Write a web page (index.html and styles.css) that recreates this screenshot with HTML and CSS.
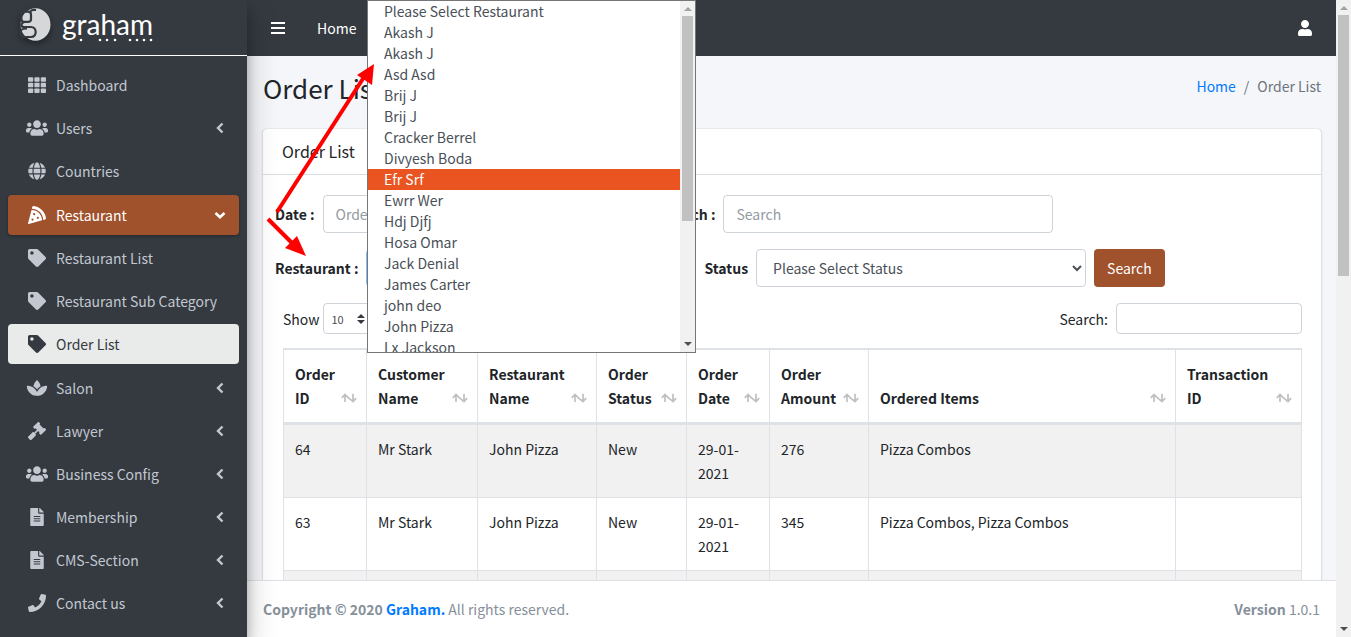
FILE: index.html
```html
<!DOCTYPE html>
<html lang="en">
<head>
<meta charset="utf-8">
<title>Order List</title>
<link rel="stylesheet" href="styles.css">
</head>
<body>
<svg class="defs" aria-hidden="true">
  <symbol id="i-th" viewBox="0 0 512 512"><rect x="0" y="32" width="149" height="128" rx="24"/><rect x="181" y="32" width="149" height="128" rx="24"/><rect x="363" y="32" width="149" height="128" rx="24"/><rect x="0" y="192" width="149" height="128" rx="24"/><rect x="181" y="192" width="149" height="128" rx="24"/><rect x="363" y="192" width="149" height="128" rx="24"/><rect x="0" y="352" width="149" height="128" rx="24"/><rect x="181" y="352" width="149" height="128" rx="24"/><rect x="363" y="352" width="149" height="128" rx="24"/></symbol>
  <symbol id="i-users" viewBox="0 0 640 512"><path d="M96 224c35.3 0 64-28.7 64-64s-28.7-64-64-64-64 28.7-64 64 28.7 64 64 64zm448 0c35.3 0 64-28.7 64-64s-28.7-64-64-64-64 28.7-64 64 28.7 64 64 64zm32 32h-64c-17.6 0-33.5 7.1-45.1 18.6 40.3 22.1 68.9 62 75.1 109.4h66c17.7 0 32-14.3 32-32v-32c0-35.3-28.7-64-64-64zm-256 0c61.9 0 112-50.1 112-112S381.9 32 320 32 208 82.1 208 144s50.1 112 112 112zm76.8 32h-8.3c-20.8 10-43.9 16-68.5 16s-47.6-6-68.5-16h-8.3C179.6 288 128 339.6 128 403.2V432c0 26.5 21.5 48 48 48h288c26.5 0 48-21.5 48-48v-28.8c0-63.6-51.6-115.2-115.2-115.2zm-223.7-13.4C161.5 263.1 145.6 256 128 256H64c-35.3 0-64 28.7-64 64v32c0 17.7 14.3 32 32 32h65.9c6.3-47.4 34.9-87.3 75.2-109.4z"/></symbol>
  <symbol id="i-globe" viewBox="0 0 496 512"><path d="M336.5 160C322 70.7 287.8 8 248 8s-74 62.7-88.5 152h177zM152 256c0 22.2 1.2 43.5 3.3 64h185.3c2.1-20.5 3.3-41.8 3.3-64s-1.2-43.5-3.3-64H155.3c-2.1 20.5-3.3 41.8-3.3 64zm324.7-96c-28.6-67.9-86.5-120.4-158-141.6 24.4 33.8 41.2 84.7 50 141.6h108zM177.2 18.4C105.8 39.6 47.8 92.1 19.3 160h108c8.7-56.9 25.5-107.8 49.9-141.6zM487.4 192H372.7c2.1 21 3.3 42.5 3.3 64s-1.2 43-3.3 64h114.6c5.5-20.5 8.6-41.8 8.6-64s-3.1-43.5-8.5-64zM120 256c0-21.5 1.2-43 3.3-64H8.6C3.2 212.5 0 233.8 0 256s3.2 43.5 8.6 64h114.6c-2-21-3.2-42.5-3.2-64zm39.5 96c14.5 89.3 48.7 152 88.5 152s74-62.7 88.5-152h-177zm159.3 141.6c71.4-21.2 129.4-73.7 158-141.6h-108c-8.8 56.9-25.6 107.8-50 141.6zM19.3 352c28.6 67.9 86.5 120.4 158 141.6-24.4-33.8-41.2-84.7-50-141.6h-108z"/></symbol>
  <symbol id="i-pizza" viewBox="0 0 512 512"><path d="M158.87.15c-16.16-1.52-31.2 8.42-35.33 24.12l-14.81 56.27c187.62 5.49 314.54 130.61 322.48 317l56.94-15.78c15.72-4.36 25.49-19.68 23.62-35.9C490.89 165.08 340.78 17.32 158.87.15zm-58.47 112L.55 491.64a16.21 16.21 0 0 0 20 19.75l379-105.1c-4.27-174.89-123.08-292.14-299.15-294.1zM128 416a32 32 0 1 1 32-32 32 32 0 0 1-32 32zm48-152a32 32 0 1 1 32-32 32 32 0 0 1-32 32zm104 104a32 32 0 1 1 32-32 32 32 0 0 1-32 32z"/></symbol>
  <symbol id="i-tag" viewBox="0 0 512 512"><path d="M0 252.118V48C0 21.49 21.49 0 48 0h204.118a48 48 0 0 1 33.941 14.059l211.882 211.882c18.745 18.745 18.745 49.137 0 67.882L293.823 497.941c-18.745 18.745-49.137 18.745-67.882 0L14.059 286.059A48 48 0 0 1 0 252.118zM112 64c-26.51 0-48 21.49-48 48s21.49 48 48 48 48-21.49 48-48-21.49-48-48-48z"/></symbol>
  <symbol id="i-spa" viewBox="0 0 576 512"><path d="M568.25 192c-29.04.13-135.01 6.16-213.84 83-33.12 29.63-53.36 63.3-66.41 94.86-13.05-31.56-33.29-65.23-66.41-94.86-78.83-76.84-184.8-82.87-213.84-83-4.41-.02-7.79 3.4-7.75 7.82.23 27.92 7.14 126.14 88.77 199.3C172.79 480.94 256 480 288 480s115.19.95 199.23-80.88c81.64-73.17 88.54-171.38 88.77-199.3.04-4.42-3.34-7.84-7.75-7.82zM287.98 302.6c12.82-18.85 27.6-35.78 44.09-50.52 19.09-18.61 39.58-33.3 60.26-45.18-16.44-70.5-51.72-133.05-96.73-172.22-4.11-3.58-11.02-3.58-15.14 0-44.99 39.14-80.27 101.63-96.73 172.07 20.37 11.7 40.5 26.14 59.22 44.39a282.768 282.768 0 0 1 45.03 51.46z"/></symbol>
  <symbol id="i-gavel" viewBox="0 0 512 512"><path d="M504.971 199.362l-22.627-22.627c-9.373-9.373-24.569-9.373-33.941 0l-5.657 5.657L329.608 69.255l5.657-5.657c9.373-9.373 9.373-24.569 0-33.941L312.638 7.029c-9.373-9.373-24.569-9.373-33.941 0L154.246 131.48c-9.373 9.373-9.373 24.569 0 33.941l22.627 22.627c9.373 9.373 24.569 9.373 33.941 0l5.657-5.657 39.598 39.598-81.04 81.04-5.657-5.657c-12.497-12.497-32.758-12.497-45.255 0L9.373 412.118c-12.497 12.497-12.497 32.758 0 45.255l45.255 45.255c12.497 12.497 32.758 12.497 45.255 0l114.745-114.745c12.497-12.497 12.497-32.758 0-45.255l-5.657-5.657 81.04-81.04 39.598 39.598-5.657 5.657c-9.373 9.373-9.373 24.569 0 33.941l22.627 22.627c9.373 9.373 24.569 9.373 33.941 0l124.451-124.451c9.372-9.372 9.372-24.568 0-33.941z"/></symbol>
  <symbol id="i-file" viewBox="0 0 384 512"><path d="M224 136V0H24C10.7 0 0 10.7 0 24v464c0 13.3 10.7 24 24 24h336c13.3 0 24-10.7 24-24V160H248c-13.2 0-24-10.8-24-24zm64 236c0 6.6-5.4 12-12 12H108c-6.6 0-12-5.4-12-12v-8c0-6.6 5.4-12 12-12h168c6.6 0 12 5.4 12 12v8zm0-64c0 6.6-5.4 12-12 12H108c-6.6 0-12-5.4-12-12v-8c0-6.6 5.4-12 12-12h168c6.6 0 12 5.4 12 12v8zm0-72v8c0 6.6-5.4 12-12 12H108c-6.6 0-12-5.4-12-12v-8c0-6.6 5.4-12 12-12h168c6.6 0 12 5.4 12 12zm96-114.1v6.1H256V0h6.1c6.4 0 12.5 2.5 17 7l97.9 98c4.5 4.5 7 10.6 7 16.9z"/></symbol>
  <symbol id="i-phone" viewBox="0 0 512 512"><path d="M493.4 24.6l-104-24c-11.3-2.6-22.9 3.3-27.5 13.9l-48 112c-4.2 9.8-1.4 21.3 6.9 28l60.6 49.6c-36 76.7-98.9 140.5-177.2 177.2l-49.6-60.6c-6.8-8.3-18.2-11.1-28-6.9l-112 48C3.9 366.5-2 378.1.6 389.4l24 104C27.1 504.2 36.7 512 48 512c256.1 0 464-207.5 464-464 0-11.2-7.7-20.9-18.6-23.4z"/></symbol>
  <symbol id="i-user" viewBox="0 0 448 512"><path d="M224 256c70.7 0 128-57.3 128-128S294.7 0 224 0 96 57.3 96 128s57.3 128 128 128zm89.6 32h-16.7c-22.2 10.2-46.9 16-72.9 16s-50.6-5.8-72.9-16h-16.7C60.2 288 0 348.2 0 422.4V464c0 26.5 21.5 48 48 48h352c26.5 0 48-21.5 48-48v-41.6c0-74.2-60.2-134.4-134.4-134.4z"/></symbol>
  <symbol id="i-left" viewBox="0 0 12 12"><path d="M8.500 1.500 4 6l4.500 4.500" fill="none" stroke="currentColor" stroke-width="2.400"/></symbol>
  <symbol id="i-down" viewBox="0 0 12 12"><path d="M1.500 4 6 8.200 10.500 4" fill="none" stroke="currentColor" stroke-width="2.600"/></symbol>
  <symbol id="i-sort" viewBox="0 0 16 10"><path d="M4 9V1.500M.8 4.800 4 1.500l3.500 3.300L9 6.200l3 2.300 3.200-3.300M12 .8v7.500" fill="none" stroke="currentColor" stroke-width="1.700"/></symbol>
</svg>

<aside class="sidebar">
  <a class="brand" href="#">
    <svg class="brand-mark" viewBox="0 0 34 36" aria-hidden="true">
      <ellipse cx="17.500" cy="16.500" rx="15" ry="16.300" fill="#d5d7d8"/>
      <g fill="none" stroke="#343a40" stroke-width="2.200">
        <rect x="3.400" y="3.700" width="9.600" height="10.200" rx="3"/>
        <path d="M12 5c0-2.500 2-3.500 6-3M6 14c-4 2-3 5 0 5h7c6 0 6.500 10 0 10H7c-4 0-5-3-4-6.500 1-2 3-2 6-2"/>
      </g>
    </svg>
    <span class="brand-word">graham
      <svg class="brand-dots" viewBox="0 0 92 4" aria-hidden="true"><g fill="#fff"><circle cx="19" cy="2" r="1.300"/><circle cx="38" cy="2" r="1.300"/><circle cx="45" cy="2" r="1.300"/><circle cx="53" cy="2" r="1.300"/><circle cx="68" cy="2" r="1.300"/><circle cx="75" cy="2" r="1.300"/><circle cx="82" cy="2" r="1.300"/><circle cx="89" cy="2" r="1.300"/></g></svg>
    </span>
  </a>
  <nav class="menu">
    <a class="item" href="#"><svg class="icon"><use href="#i-th"/></svg><span>Dashboard</span></a>
    <a class="item" href="#"><svg class="icon"><use href="#i-users"/></svg><span>Users</span><svg class="caret"><use href="#i-left"/></svg></a>
    <a class="item" href="#"><svg class="icon"><use href="#i-globe"/></svg><span>Countries</span></a>
    <div class="group">
      <a class="item open" href="#"><svg class="icon"><use href="#i-pizza"/></svg><span>Restaurant</span><svg class="caret"><use href="#i-down"/></svg></a>
      <a class="item" href="#"><svg class="icon"><use href="#i-tag"/></svg><span>Restaurant List</span></a>
      <a class="item" href="#"><svg class="icon"><use href="#i-tag"/></svg><span>Restaurant Sub Category</span></a>
      <a class="item current" href="#"><svg class="icon"><use href="#i-tag"/></svg><span>Order List</span></a>
    </div>
    <a class="item" href="#"><svg class="icon"><use href="#i-spa"/></svg><span>Salon</span><svg class="caret"><use href="#i-left"/></svg></a>
    <a class="item" href="#"><svg class="icon"><use href="#i-gavel"/></svg><span>Lawyer</span><svg class="caret"><use href="#i-left"/></svg></a>
    <a class="item" href="#"><svg class="icon"><use href="#i-users"/></svg><span>Business Config</span><svg class="caret"><use href="#i-left"/></svg></a>
    <a class="item" href="#"><svg class="icon"><use href="#i-file"/></svg><span>Membership</span><svg class="caret"><use href="#i-left"/></svg></a>
    <a class="item" href="#"><svg class="icon"><use href="#i-file"/></svg><span>CMS-Section</span><svg class="caret"><use href="#i-left"/></svg></a>
    <a class="item" href="#"><svg class="icon"><use href="#i-phone"/></svg><span>Contact us</span><svg class="caret"><use href="#i-left"/></svg></a>
  </nav>
</aside>

<div class="page">
  <header class="navbar">
    <button class="burger" type="button" aria-label="Toggle menu"><i></i><i></i><i></i></button>
    <a class="nav-link" href="#">Home</a>
    <button class="account" type="button" aria-label="Account"><svg class="icon"><use href="#i-user"/></svg></button>
  </header>

  <main class="content">
    <div class="heading">
      <h1>Order List</h1>
      <nav class="crumbs"><a href="#">Home</a><span>/</span><span>Order List</span></nav>
    </div>

    <section class="card">
      <h2 class="card-title">Order List</h2>
      <div class="card-body">
        <form class="filters">
          <div class="filter-row">
            <label for="date">Date :</label>
            <input class="control" id="date" type="text" placeholder="Order Date">
            <label for="keyword">Search :</label>
            <input class="control" id="keyword" type="text" placeholder="Search">
          </div>
          <div class="filter-row">
            <label for="restaurant">Restaurant :</label>
            <select class="control focused" id="restaurant"><option>Please Select Restaurant</option></select>
            <label for="status">Status</label>
            <select class="control" id="status"><option>Please Select Status</option></select>
            <button class="submit" type="submit">Search</button>
          </div>
        </form>
        <div class="table-tools">
          <div class="length"><label for="length">Show</label><span class="length-box"><select id="length"><option>10</option></select><svg class="updown" viewBox="0 0 8 10" aria-hidden="true"><path d="M0 4 4 0l4 4zM0 6l4 4 4-4z"/></svg></span></div>
          <div class="lookup"><label for="lookup">Search:</label><input id="lookup" type="search"></div>
        </div>
        <table class="orders">
          <colgroup><col class="w-id"><col class="w-customer"><col class="w-restaurant"><col class="w-status"><col class="w-date"><col class="w-amount"><col><col class="w-transaction"></colgroup>
          <thead>
            <tr>
              <th><div class="th">Order ID<svg class="sort"><use href="#i-sort"/></svg></div></th>
              <th><div class="th">Customer Name<svg class="sort"><use href="#i-sort"/></svg></div></th>
              <th><div class="th">Restaurant Name<svg class="sort"><use href="#i-sort"/></svg></div></th>
              <th><div class="th">Order Status<svg class="sort"><use href="#i-sort"/></svg></div></th>
              <th><div class="th">Order Date<svg class="sort"><use href="#i-sort"/></svg></div></th>
              <th><div class="th">Order Amount<svg class="sort"><use href="#i-sort"/></svg></div></th>
              <th><div class="th">Ordered Items<svg class="sort"><use href="#i-sort"/></svg></div></th>
              <th><div class="th">Transaction ID<svg class="sort"><use href="#i-sort"/></svg></div></th>
            </tr>
          </thead>
          <tbody>
            <tr><td>64</td><td>Mr Stark</td><td>John Pizza</td><td>New</td><td>29-01-2021</td><td>276</td><td>Pizza Combos</td><td></td></tr>
            <tr><td>63</td><td>Mr Stark</td><td>John Pizza</td><td>New</td><td>29-01-2021</td><td>345</td><td>Pizza Combos, Pizza Combos</td><td></td></tr>
            <tr><td></td><td></td><td></td><td></td><td></td><td></td><td></td><td></td></tr>
          </tbody>
        </table>
      </div>
    </section>
  </main>

  <footer class="footer">
    <p><strong>Copyright © 2020 <a href="#">Graham.</a></strong> All rights reserved.</p>
    <p><strong>Version</strong> 1.0.1</p>
  </footer>
</div>

<div class="scrollbar" aria-hidden="true"><i class="up"></i><div class="track"><div class="thumb"></div></div><i class="down"></i></div>

<div class="popup">
  <ul class="options" role="listbox" aria-label="Restaurant">
    <li role="option">Please Select Restaurant</li>
    <li role="option">Akash J</li>
    <li role="option">Akash J</li>
    <li role="option">Asd Asd</li>
    <li role="option">Brij J</li>
    <li role="option">Brij J</li>
    <li role="option">Cracker Berrel</li>
    <li role="option">Divyesh Boda</li>
    <li role="option" class="active" aria-selected="true">Efr Srf</li>
    <li role="option">Ewrr Wer</li>
    <li role="option">Hdj Djfj</li>
    <li role="option">Hosa Omar</li>
    <li role="option">Jack Denial</li>
    <li role="option">James Carter</li>
    <li role="option">john deo</li>
    <li role="option">John Pizza</li>
    <li role="option">Lx Jackson</li>
  </ul>
  <div class="scrollbar" aria-hidden="true"><i class="up"></i><div class="track"><div class="thumb long"></div></div><i class="down"></i></div>
</div>

<svg class="arrows" viewBox="0 0 120 200" aria-hidden="true">
  <g fill="red" stroke="red">
    <path d="M17 152 106 14" stroke-width="4"/>
    <path d="M114 4 112 25 97 15z" stroke="none"/>
    <path d="M8 159 36 187" stroke-width="4"/>
    <path d="M46 196 25 188 37 176z" stroke="none"/>
  </g>
</svg>
</body>
</html>
```

FILE: styles.css
```css
* { box-sizing: border-box; }

body {
  margin: 0;
  height: 100vh;
  display: flex;
  overflow: hidden;
  position: relative;
  background: #f4f6f9;
  color: #212529;
  font: 14px/24px "Noto Sans CJK SC", "Open Sans", sans-serif;
}

a { color: #007bff; text-decoration: none; }
h1, h2, p, ul { margin: 0; padding: 0; }
button, input, select { font: inherit; color: inherit; }
.defs { position: absolute; width: 0; height: 0; }

/* Sidebar */
.sidebar {
  flex: 0 0 247px;
  background: #343a40;
  box-shadow: 0 14px 28px rgba(0, 0, 0, .25), 0 10px 10px rgba(0, 0, 0, .22);
  z-index: 2;
}
.brand {
  display: flex;
  align-items: flex-start;
  gap: 10px;
  height: 56px;
  padding: 8px 18px 0;
  border-bottom: 1px solid #fff;
  color: #fff;
}
.brand-mark { width: 34px; height: 36px; filter: drop-shadow(0 3px 3px rgba(0, 0, 0, .4)); }
.brand-word { position: relative; font: 28px/32px Lato, sans-serif; }
.brand-dots { position: absolute; left: 0; bottom: -2px; width: 92px; height: 4px; }
.menu, .group {
  display: flex;
  flex-direction: column;
  gap: 3px;
}
.menu { padding: 9px 8px; }
.group { margin: 1px 0; }
.item {
  display: flex;
  align-items: center;
  height: 40px;
  padding: 0 13px 0 18px;
  border-radius: 4px;
  color: #c2c7d0;
}
.icon { width: 22px; height: 18px; fill: currentColor; }
.item span { margin-left: 8px; flex: 1; white-space: nowrap; }
.caret { width: 12px; height: 12px; }
.open { background: #a0522d; color: #fff; box-shadow: 0 1px 3px rgba(0, 0, 0, .3); }
.current { background: #e9eaea; color: #343a40; }

/* Page */
.page { flex: 1; min-width: 0; display: flex; flex-direction: column; }
.navbar {
  flex: 0 0 56px;
  display: flex;
  align-items: center;
  padding: 0 20px 0 24px;
  background: #343a40;
}
.burger, .account { border: 0; padding: 0; background: none; color: #fff; cursor: pointer; }
.burger { display: flex; flex-direction: column; gap: 3px; width: 14px; }
.burger i { height: 2px; background: #fff; }
.nav-link { margin-left: 32px; color: #fff; }
.account { margin-left: auto; display: flex; }
.account .icon { height: 16px; }

.content { flex: 1; min-height: 0; overflow: hidden; padding: 15px 15px 0 16px; }
.heading { display: flex; justify-content: space-between; align-items: flex-start; }
h1 { font-size: 26px; line-height: 34px; font-weight: 400; }
.crumbs { display: flex; gap: 8px; padding-top: 3px; color: #6c757d; }

.card {
  margin-top: 24px;
  background: #fff;
  border-radius: 4px;
  box-shadow: 0 0 1px rgba(0, 0, 0, .2), 0 1px 3px rgba(0, 0, 0, .2);
}
.card-title {
  padding: 10px 19px;
  border-bottom: 1px solid #dcdddf;
  font-size: 16px;
  line-height: 25px;
  font-weight: 400;
}
.card-body { padding: 20px 19px 0 20px; }
.filters { display: flex; flex-direction: column; gap: 16px; margin-left: -8px; }
.filter-row { display: flex; align-items: center; gap: 8px; }
.filter-row label { font-weight: 700; white-space: nowrap; }
.control {
  width: 330px;
  height: 38px;
  padding: 0 12px;
  border: 1px solid #ced4da;
  border-radius: 4px;
  background: #fff;
  color: #495057;
}
.control::placeholder { color: #939ba2; opacity: 1; }
.focused { border-color: #80bdff; }
.submit {
  height: 38px;
  padding: 0 13px;
  border: 0;
  border-radius: 4px;
  background: #a0522d;
  color: #fff;
}

.table-tools { display: flex; justify-content: space-between; margin: 16px 0 14px; }
.length, .lookup { display: flex; align-items: center; }
.length { gap: 3px; }
.lookup { gap: 8px; }
.length-box { display: flex; align-items: center; position: relative; }
.length select {
  appearance: none;
  width: 54px;
  height: 31px;
  padding: 0 8px;
  border: 1px solid #ced4da;
  border-radius: 4px;
  background: #fff;
  color: #495057;
  font-size: 11px;
}
.updown { position: absolute; right: 12px; width: 8px; height: 10px; fill: #343a40; }
.lookup input {
  width: 186px;
  height: 31px;
  border: 1px solid #ced4da;
  border-radius: 4px;
}

.orders {
  width: 100%;
  table-layout: fixed;
  border-collapse: separate;
  border-spacing: 0;
  border: 1px solid #dee2e6;
  border-width: 1px 0 0 1px;
}
.w-id { width: 83px; }
.w-customer { width: 111px; }
.w-restaurant { width: 119px; }
.w-status { width: 90px; }
.w-date { width: 83px; }
.w-amount { width: 99px; }
.w-transaction { width: 126px; }
.orders th, .orders td {
  height: 73px;
  padding: 12px 11px;
  border: 1px solid #dee2e6;
  border-width: 0 1px 1px 0;
  text-align: left;
  vertical-align: top;
}
.orders th {
  padding-right: 9px;
  border-top-width: 1px;
  border-bottom-width: 3px;
  vertical-align: bottom;
}
.orders tbody tr:nth-child(odd) { background: #f1f1f1; }
.th { display: flex; align-items: flex-end; justify-content: space-between; }
.sort { flex: 0 0 16px; height: 10px; margin-bottom: 7px; color: #bfc0c2; }

.footer {
  flex: 0 0 57px;
  display: flex;
  align-items: center;
  justify-content: space-between;
  padding: 0 16px;
  border-top: 1px solid #dee2e6;
  background: #fff;
  color: #869099;
}

/* Scrollbars */
.scrollbar {
  flex: 0 0 15px;
  display: flex;
  flex-direction: column;
  align-items: center;
  background: #f1f1f1;
}
.scrollbar i { border: 4px solid transparent; }
.scrollbar .up { margin: 2px 0 5px; border-bottom-color: #a3a3a3; }
.scrollbar .down { margin: 5px 0 2px; border-top-color: #505050; }
.track { flex: 1; width: 11px; }
.thumb { height: 43%; background: #c1c1c1; }
.thumb.long { height: 64%; }

/* Open list of the restaurant drop-down */
.popup {
  position: absolute;
  left: 367px;
  top: 0;
  width: 329px;
  height: 353px;
  display: flex;
  border: 1px solid #767676;
  background: #fff;
  z-index: 3;
}
.options { flex: 1; overflow: hidden; list-style: none; color: #495057; }
.options li { height: 21px; padding-left: 16px; line-height: 21px; }
.options .active { background: #e95420; color: #fff; }

.arrows { position: absolute; left: 260px; top: 60px; width: 120px; height: 200px; z-index: 4; pointer-events: none; }
```
